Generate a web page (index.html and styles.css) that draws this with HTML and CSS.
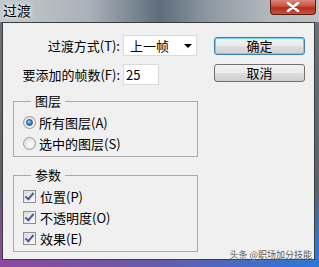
FILE: index.html
```html
<!DOCTYPE html>
<html lang="zh-CN">
<head>
    <meta charset="UTF-8">
    <title>过渡</title>
    <link rel="stylesheet" href="styles.css">
</head>
<body>
    <div class="window">
        <!-- Title bar -->
        <div class="titlebar">
            <span class="title">过渡</span>
            <span class="close">
                <svg width="14" height="10" viewBox="0 0 14 10"><path d="M2 1 L12 9 M12 1 L2 9" stroke="#fff" stroke-width="2.6" stroke-linecap="round"/></svg>
            </span>
        </div>

        <!-- Dialog body -->
        <div class="client">
            <div class="main">
                <div class="fields">
                    <label class="field-label">过渡方式(T):</label>
                    <div class="select"><span>上一帧</span><span class="arrow"></span></div>
                    <label class="field-label">要添加的帧数(F):</label>
                    <div class="input">25</div>
                </div>

                <fieldset class="group">
                    <legend>图层</legend>
                    <div class="option"><span class="radio checked"></span>所有图层(A)</div>
                    <div class="option"><span class="radio"></span>选中的图层(S)</div>
                </fieldset>

                <fieldset class="group group-params">
                    <legend>参数</legend>
                    <div class="option"><span class="check"></span>位置(P)</div>
                    <div class="option"><span class="check"></span>不透明度(O)</div>
                    <div class="option"><span class="check"></span>效果(E)</div>
                </fieldset>
            </div>

            <div class="actions">
                <div class="btn btn-default">确定</div>
                <div class="btn">取消</div>
            </div>
        </div>

        <div class="watermark">头条 @职场加分技能</div>
    </div>
</body>
</html>
```

FILE: styles.css
```css
/* General */
body {
    margin: 0;
    background: #fff;
    font-family: "Noto Sans CJK SC", "Liberation Sans", sans-serif;
    font-size: 13px;
    color: #000;
}

/* Window frame */
.window {
    position: relative;
    width: 319px;
    height: 267px;
    box-sizing: border-box;
    padding: 0 4px 7px 2px;
    background:
        linear-gradient(180deg, #6d737a 0%, #5c6168 70%, rgba(0,0,0,0) 92%),
        linear-gradient(90deg, #8b4a9e 0%, #6a5aa8 45%, #2d78d6 100%);
    display: flex;
    flex-direction: column;
}

.titlebar {
    height: 22px;
    margin: 0 -4px 0 -2px;
    padding: 0 3px 0 3px;
    display: flex;
    justify-content: space-between;
    align-items: flex-start;
    background: linear-gradient(90deg, #c3c8cd 0%, #aab1b8 28%, #5e6e7e 50%, #8f99a2 66%, #b3b9bf 85%, #bcc1c6 100%);
}

.title {
    line-height: 21px;
    font-size: 14px;
    text-shadow: 0 0 6px #fff, 0 0 3px #fff;
}

.close {
    width: 44px;
    height: 14px;
    display: flex;
    align-items: center;
    justify-content: center;
    border: 1px solid #5a1a12;
    border-top: none;
    border-radius: 0 0 4px 4px;
    background: linear-gradient(180deg, #d9877a 0%, #c8503f 45%, #b22d1b 55%, #c9523c 100%);
}

/* Client area */
.client {
    flex: 1;
    display: flex;
    padding: 12px 0 0 10px;
    border: 1px solid #3c3c3c;
    background: #f0f0f0;
}

.main {
    width: 185px;
}

.fields {
    display: grid;
    grid-template-columns: 107px auto;
    column-gap: 3px;
    row-gap: 8px;
    align-items: center;
}

.field-label {
    text-align: right;
    line-height: 21px;
}

.select {
    width: 74px;
    height: 21px;
    box-sizing: border-box;
    display: flex;
    align-items: center;
    justify-content: space-between;
    padding: 0 4px 0 6px;
    background: #fff;
    border: 1px solid #dadada;
}

.arrow {
    width: 0;
    height: 0;
    border-left: 4px solid transparent;
    border-right: 4px solid transparent;
    border-top: 4px solid #000;
}

.input {
    width: 36px;
    height: 21px;
    box-sizing: border-box;
    padding-left: 2px;
    line-height: 19px;
    background: #fff;
    border: 1px solid #dadada;
}

/* Group boxes */
.group {
    margin: 8px 0 0 0;
    padding: 3px 0 2px 9px;
    border: 1px solid #a9a9a9;
}

.group-params {
    margin-top: 10px;
}

.group legend {
    margin-left: 8px;
    padding: 0 4px;
    line-height: 16px;
}

.option {
    height: 21px;
    display: flex;
    align-items: center;
    gap: 3px;
}

.radio {
    width: 13px;
    height: 13px;
    box-sizing: border-box;
    border-radius: 50%;
    border: 1px solid #9a9a9a;
    background: radial-gradient(circle at 60% 60%, #fdfdfd, #d8d8d8);
    display: flex;
    align-items: center;
    justify-content: center;
}

.radio.checked::after {
    content: "";
    width: 5px;
    height: 5px;
    border-radius: 50%;
    background: radial-gradient(circle at 40% 35%, #9cd0f7, #1e5fa8 80%);
    border: 1px solid #1d4f8c;
}

.check {
    width: 13px;
    height: 13px;
    box-sizing: border-box;
    border: 1px solid #8e8f8f;
    background: linear-gradient(135deg, #dcdcdc, #fbfbfb);
    position: relative;
    margin-right: 1px;
}

.check::after {
    content: "";
    position: absolute;
    left: 3px;
    top: 0;
    width: 3px;
    height: 7px;
    border: solid #4a5f98;
    border-width: 0 2px 2px 0;
    transform: rotate(40deg);
}

/* Buttons */
.actions {
    margin-left: 16px;
    padding-top: 2px;
    display: flex;
    flex-direction: column;
    gap: 9px;
}

.btn {
    width: 91px;
    height: 18px;
    box-sizing: border-box;
    border: 1px solid #707070;
    border-radius: 3px;
    text-align: center;
    line-height: 16px;
    background: linear-gradient(180deg, #f2f2f2 0%, #ebebeb 50%, #dddddd 51%, #cfcfcf 100%);
}

.btn-default {
    border-color: #3c7fb1;
    box-shadow: inset 0 0 0 1px #6fd0f5;
    background: linear-gradient(180deg, #f2f2f2 0%, #ebebeb 50%, #dddddd 51%, #d2d2d2 100%);
}

/* Watermark */
.watermark {
    position: absolute;
    right: 7px;
    bottom: 6px;
    font-size: 9px;
    color: #5a5a5a;
    text-shadow: 0 0 2px #fff;
}
```
